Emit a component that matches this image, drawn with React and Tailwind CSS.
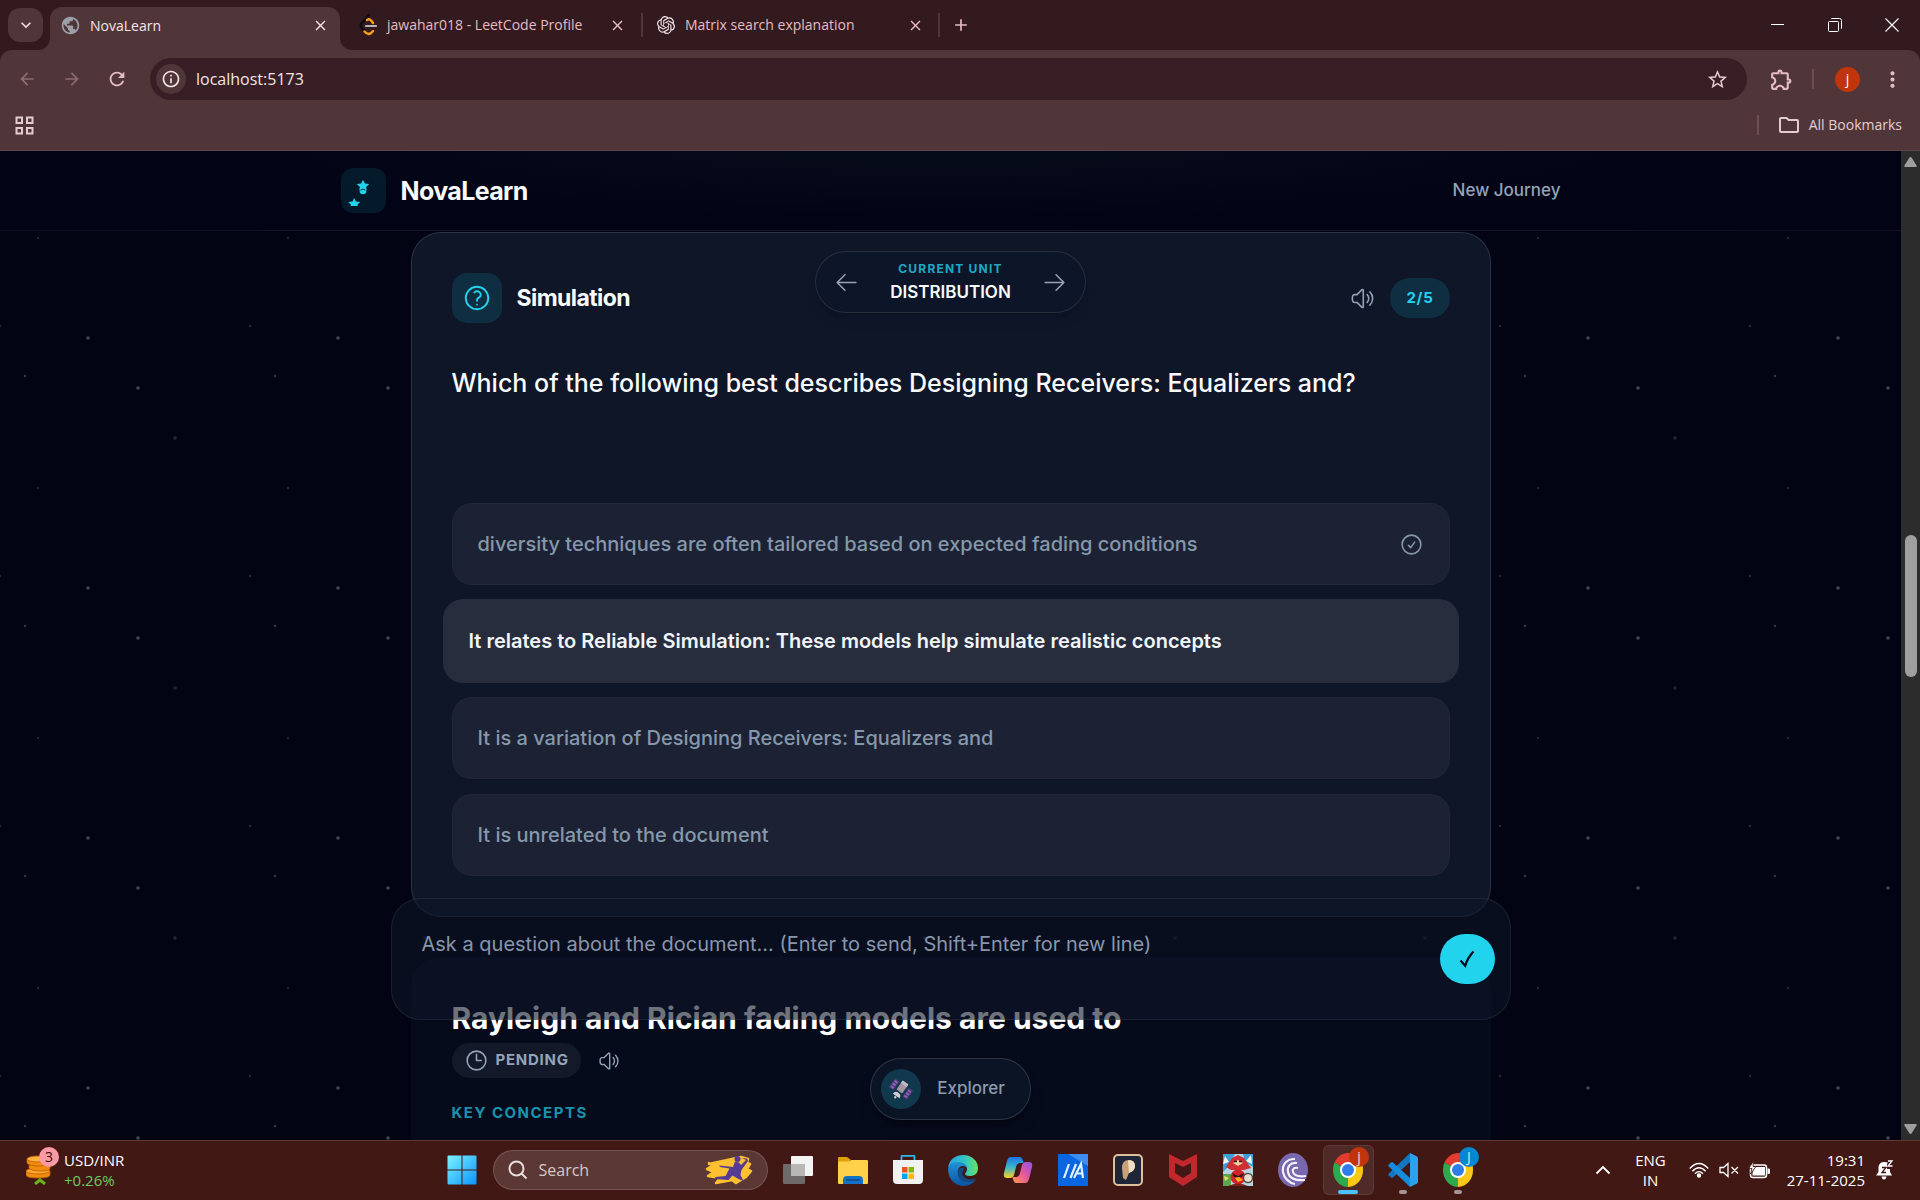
// src/App.jsx
import { useState } from 'react';
import {
  HiOutlineArrowLeft,
  HiOutlineArrowRight,
  HiOutlineCheckCircle,
  HiOutlineClock,
  HiOutlineQuestionMarkCircle,
  HiOutlineSpeakerWave,
} from 'react-icons/hi2';
import {
  MdArrowBack,
  MdArrowForward,
  MdClose,
  MdKeyboardArrowDown,
  MdMoreVert,
  MdOutlineExtension,
  MdOutlineFolder,
  MdOutlineInfo,
  MdPublic,
  MdRefresh,
  MdStarBorder,
  MdAdd,
} from 'react-icons/md';
import { SiOpenai } from 'react-icons/si';

const OPTIONS = [
  'diversity techniques are often tailored based on expected fading conditions',
  'It relates to Reliable Simulation: These models help simulate realistic concepts',
  'It is a variation of Designing Receivers: Equalizers and',
  'It is unrelated to the document',
];

/* ---------- Browser chrome ---------- */

function LeetCodeIcon() {
  return (
    <svg width="18" height="24" viewBox="0 0 18 24" fill="none" strokeLinecap="round">
      <path d="M10 2 2.5 10.5q-1.5 2 0 4L5 18" stroke="#0b0b0b" strokeWidth="2.4" />
      <path d="M5.5 18.500q3.500 4 6.500 1.500l2-2" stroke="#ffa116" strokeWidth="2.4" />
      <path d="M8 7q2.500-1.800 4.500 1l1.500 2" stroke="#ffa116" strokeWidth="2.4" />
      <path d="M7 13h10" stroke="#b3b3b3" strokeWidth="2.2" />
    </svg>
  );
}

function TabFlare({ flip }) {
  return (
    <svg width="12" height="12" viewBox="0 0 12 12" className={flip ? 'self-end -scale-x-100' : 'self-end'}>
      <path d="M12 0v12H0A12 12 0 0 0 12 0Z" fill="#503539" />
    </svg>
  );
}

function CloseTab({ label }) {
  return (
    <button aria-label={label} className="flex size-5 items-center justify-center">
      <MdClose size={17} />
    </button>
  );
}

function TabStrip() {
  return (
    <div className="flex h-[50px] items-stretch pl-2 text-sm text-[#e6bcc4]">
      <button aria-label="Search tabs" className="mt-2 flex h-[34px] w-[35px] items-center justify-center rounded-xl bg-[#503539] text-[#f3dcdf]">
        <MdKeyboardArrowDown size={20} />
      </button>
      <div className="-ml-[5px] flex">
        <TabFlare />
        <div className="mt-[7px] flex w-[290px] items-center rounded-t-xl bg-[#503539] pb-[6px] pl-[10px] pr-[10px] text-[#f6e3e6]">
          <MdPublic size={21} className="text-[#9aa0a6]" />
          <span className="ml-[9px] flex-1">NovaLearn</span>
          <CloseTab label="Close NovaLearn" />
        </div>
        <TabFlare flip />
      </div>
      <div className="flex w-[283px] items-center pl-[7px] pr-[8px]">
        <LeetCodeIcon />
        <span className="ml-[10px] flex-1">jawahar018 - LeetCode Profile</span>
        <CloseTab label="Close LeetCode" />
      </div>
      <div className="ml-[6px] flex w-[299px] items-center">
        <div className="h-6 w-[2px] bg-[#503539]" />
        <SiOpenai size={18} className="ml-[14px] text-[#f1e6e8]" />
        <span className="ml-[10px] flex-1">Matrix search explanation</span>
        <CloseTab label="Close Matrix search" />
        <div className="ml-[13px] h-6 w-[2px] bg-[#503539]" />
      </div>
      <button aria-label="New tab" className="ml-[11px] flex items-center">
        <MdAdd size={20} />
      </button>
      <div className="ml-auto flex text-white">
        <button aria-label="Minimize" className="flex w-[57px] items-center justify-center">
          <svg width="14" height="14" viewBox="0 0 14 14"><path d="M0 6.500h13" stroke="currentColor" /></svg>
        </button>
        <button aria-label="Restore" className="flex w-[57px] items-center justify-center">
          <svg width="14" height="14" viewBox="0 0 14 14" fill="none" stroke="currentColor">
            <rect x=".5" y="3.500" width="10" height="10" rx="1" />
            <path d="M3 1q.5-.5 1-.5h7.500q2 0 2 2V10q0 .5-.5 1" />
          </svg>
        </button>
        <button aria-label="Close window" className="flex w-[57px] items-center justify-center">
          <svg width="14" height="14" viewBox="0 0 14 14"><path d="m.5.5 13 13m0-13-13 13" stroke="currentColor" strokeWidth="1.200" /></svg>
        </button>
      </div>
    </div>
  );
}

function Toolbar() {
  return (
    <div className="rounded-t-xl border-b border-[#5d4647] bg-[#503539] pt-2 text-[#e6bcc4]">
      <div className="flex h-[42px] items-center">
        <div className="flex w-[150px] items-center pl-[17px] text-[#8a6c71]">
          <button aria-label="Back" className="mr-[25px]"><MdArrowBack size={20} /></button>
          <button aria-label="Forward" className="mr-[24px]"><MdArrowForward size={20} /></button>
          <button aria-label="Reload" className="text-[#e6bcc4]"><MdRefresh size={22} /></button>
        </div>
        <div className="flex h-full flex-1 items-center rounded-full bg-[#381f25] pl-[6px] pr-[18px] text-[#f3e4e6]">
          <span className="flex size-[30px] items-center justify-center rounded-full bg-[#503539]">
            <MdOutlineInfo size={20} />
          </span>
          <input
            aria-label="Address"
            defaultValue="localhost:5173"
            className="ml-[10px] h-6 flex-1 bg-transparent text-base outline-none"
          />
          <button aria-label="Bookmark this tab" className="text-[#e0c9cd]"><MdStarBorder size={23} /></button>
        </div>
        <div className="flex w-[173px] items-center pl-[22px]">
          <button aria-label="Extensions"><MdOutlineExtension size={25} /></button>
          <div className="ml-[18px] h-5 w-[2px] bg-[#6d4e53]" />
          <button aria-label="Profile" className="ml-[21px] flex size-[25px] items-center justify-center rounded-full bg-[#c0350b] text-sm leading-5 text-white">j</button>
          <button aria-label="Menu" className="ml-[20px]"><MdMoreVert size={25} /></button>
        </div>
      </div>
      <div className="flex h-[50px] items-center pl-[15px] pr-[18px] text-sm text-[#e3cdd0]">
        <button aria-label="Apps">
          <svg width="19" height="19" viewBox="0 0 19 19" fill="none" stroke="currentColor" strokeWidth="2">
            <path d="M1.500 1.500h5.500v5.500h-5.500zM12 1.500h5.500v5.500H12zM1.500 12h5.500v5.500h-5.500zM12 12h5.500v5.500H12z" />
          </svg>
        </button>
        <div className="ml-auto h-5 w-[2px] bg-[#6d4e53]" />
        <button className="ml-[18px] flex items-center gap-2">
          <MdOutlineFolder size={24} />
          All Bookmarks
        </button>
      </div>
    </div>
  );
}

/* ---------- NovaLearn page ---------- */

function Starfield() {
  return (
    <svg className="absolute inset-0 size-full" aria-hidden="true">
      <defs>
        <pattern id="stars" width="250" height="250" patternUnits="userSpaceOnUse">
          <g fill="#fff">
            <circle cx="88" cy="187" r="1.800" opacity=".26" />
            <circle cx="138" cy="237" r="1.800" opacity=".26" />
            <circle cx="175" cy="37" r="1.800" opacity=".13" />
            <circle cx="25" cy="225" r="1.200" opacity=".2" />
            <circle cx="0" cy="175" r="1.200" opacity=".14" />
            <circle cx="250" cy="175" r="1.200" opacity=".14" />
            <circle cx="38" cy="87" r="1.200" opacity=".12" />
          </g>
        </pattern>
      </defs>
      <rect width="100%" height="100%" fill="url(#stars)" />
    </svg>
  );
}

function NovaLogo() {
  return (
    <svg width="45" height="45" viewBox="0 0 45 45" fill="#22d3ee">
      <path d="m22 11.800 1.900 3.700 4.300.5-3.100 2.900.6 3.300h-7.400l.6-3.300-3.100-2.900 4.300-.5Z" />
      <circle cx="22" cy="23" r="3.300" />
      <path d="M19.500 22.200q2.500-2.400 5 0" fill="none" stroke="#04192a" strokeWidth=".9" />
      <path d="m13.200 30 1.700 3.400 4.300.6-2.700 2.600.3 1.400H9.600l.3-1.400L7.200 34l4.300-.6Z" />
    </svg>
  );
}

function PageHeader() {
  return (
    <header className="relative border-b border-white/6 bg-[radial-gradient(ellipse_at_top,#060b1a,#020415_60%)]">
      <div className="mx-auto flex max-w-[1280px] items-center gap-[15px] px-[30px] py-[17px]">
        <span className="rounded-xl bg-[#22d3ee]/10"><NovaLogo /></span>
        <h1 className="text-[25px] leading-8 font-bold tracking-tight text-slate-50">NovaLearn</h1>
        <a href="#new" className="ml-auto text-[17px] font-medium text-[#94a3b8]">New Journey</a>
      </div>
    </header>
  );
}

function Option({ text, active, done, onClick }) {
  return (
    <button
      onClick={onClick}
      className={
        active
          ? '-mx-[9px] -my-px flex h-[84px] items-center rounded-[20px] bg-[#282d3e] px-[26px] text-left text-xl font-semibold text-slate-100'
          : 'flex h-[82px] items-center justify-between rounded-[20px] border border-white/2 bg-[#1c2233] px-[25px] text-left text-xl font-medium text-[#8698ab]'
      }
    >
      {text}
      {done && <HiOutlineCheckCircle size={25} />}
    </button>
  );
}

function SimulationCard() {
  const [selected, setSelected] = useState(1);
  return (
    <section className="rounded-[30px] border border-white/12 bg-[#0e1628] p-10">
      <div className="flex items-center">
        <span className="flex size-[50px] items-center justify-center rounded-[15px] bg-[#22d3ee]/13 text-[#22d3ee]">
          <HiOutlineQuestionMarkCircle size={30} />
        </span>
        <h2 className="ml-[15px] text-[23px] leading-8 font-bold tracking-tight text-slate-50">Simulation</h2>
        <button aria-label="Read aloud" className="ml-auto text-[#94a3b8]">
          <HiOutlineSpeakerWave size={25} />
        </button>
        <span className="ml-[15px] rounded-full bg-[#22d3ee]/13 px-4 py-[10px] text-[15px] leading-5 font-bold tracking-wider text-[#22d3ee]">2/5</span>
      </div>
      <p className="mt-10 min-h-[100px] text-[25px] leading-10 font-medium text-slate-50">
        Which of the following best describes Designing Receivers: Equalizers and?
      </p>
      <div className="mt-10 flex flex-col gap-[15px]">
        {OPTIONS.map((text, i) => (
          <Option key={text} text={text} active={i === selected} done={i === 0} onClick={() => setSelected(i)} />
        ))}
      </div>
    </section>
  );
}

function TopicCard() {
  return (
    <section className="min-h-[300px] rounded-t-[30px] border border-transparent bg-[#060b1c] p-10">
      <h2 className="text-[30px] leading-10 font-bold text-white">Rayleigh and Rician fading models are used to</h2>
      <div className="mt-[5px] flex items-center gap-[17px] text-[#94a3b8]">
        <span className="flex h-[35px] items-center gap-[7px] rounded-full bg-white/6 px-3 text-[15px] font-bold tracking-wider">
          <HiOutlineClock size={25} />
          PENDING
        </span>
        <button aria-label="Read topic aloud"><HiOutlineSpeakerWave size={22} /></button>
      </div>
      <h3 className="mt-[25px] text-[15px] leading-5 font-bold tracking-widest text-[#22d3ee]/70">KEY CONCEPTS</h3>
    </section>
  );
}

function UnitSwitcher() {
  return (
    <div className="absolute inset-x-0 top-[100px] flex justify-center">
      <nav className="flex h-[62px] items-center gap-[31px] rounded-full border border-white/10 bg-[#0e1628]/80 px-[18px] text-[#94a3b8] shadow-lg shadow-black/10">
        <button aria-label="Previous unit"><HiOutlineArrowLeft size={25} /></button>
        <div className="text-center">
          <p className="text-[12px] leading-5 font-bold tracking-widest text-[#22d3ee]/80">CURRENT UNIT</p>
          <p className="text-[17px] leading-[26px] font-semibold text-slate-50">DISTRIBUTION</p>
        </div>
        <button aria-label="Next unit"><HiOutlineArrowRight size={25} /></button>
      </nav>
    </div>
  );
}

function AskBar() {
  return (
    <div className="absolute inset-x-0 bottom-[120px] flex justify-center">
      <form className="flex w-full max-w-[1120px] items-center rounded-[30px] border border-white/7 bg-[#0f1526]/60 p-[15px]" onSubmit={(e) => e.preventDefault()}>
        <textarea
          aria-label="Ask a question"
          placeholder="Ask a question about the document... (Enter to send, Shift+Enter for new line)"
          className="h-[90px] flex-1 resize-none bg-transparent p-[15px] text-xl leading-[30px] text-slate-200 outline-none placeholder:text-[#8896ab]"
        />
        <button aria-label="Send" className="flex h-[50px] w-[55px] items-center justify-center rounded-[25px] bg-[#22d3ee] text-slate-950">
          <svg width="16" height="18" viewBox="0 0 16 18" fill="none" stroke="currentColor" strokeWidth="2.200">
            <path d="m1.500 10.500 4.700 5.200Q8.500 8 14.500 1.500" />
          </svg>
        </button>
      </form>
    </div>
  );
}

function SatelliteIcon() {
  return (
    <svg width="24" height="24" viewBox="0 0 24 24">
      <g transform="rotate(35 12 12)">
        <rect x="1" y="6.500" width="5.500" height="11" fill="#4b3a63" />
        <path d="M2 8h3.500v2H2zm0 3.200h3.500v2H2zm0 3.200h3.500v2H2z" fill="#8b5fd0" />
        <rect x="17.500" y="6.500" width="5.500" height="11" fill="#4b3a63" />
        <path d="M18.500 8H22v2h-3.500zm0 3.200H22v2h-3.500zm0 3.200H22v2h-3.500z" fill="#8b5fd0" />
        <rect x="8.500" y="4" width="7" height="11" rx="1" fill="#a595a5" />
        <rect x="8.500" y="4" width="7" height="3" fill="#c6bac5" />
        <path d="M8 20.500a4 4 0 0 1 8 0Z" fill="#d4cbd3" />
        <circle cx="12" cy="22" r="1.200" fill="#d4cbd3" />
      </g>
    </svg>
  );
}

function ExplorerButton() {
  return (
    <div className="absolute inset-x-0 bottom-[20px] flex justify-center">
      <button className="flex h-[62px] items-center gap-4 rounded-full border border-white/14 bg-[#0b1424] pl-[10px] pr-[25px] text-[17px] font-medium text-[#8c9bb0] shadow-lg shadow-black/30">
        <span className="flex size-10 items-center justify-center rounded-full bg-[#11394e]"><SatelliteIcon /></span>
        Explorer
      </button>
    </div>
  );
}

function Scrollbar() {
  return (
    <div className="flex w-[19px] flex-col items-center bg-[#2c2c2c] py-[6px]">
      <svg width="13" height="10" viewBox="0 0 13 10"><path d="M6.500 0q.8 0 1.200.7l5 8q.3 1.300-1 1.300H1.300Q0 10 .3 8.700l5-8Q5.700 0 6.500 0Z" fill="#9f9f9f" /></svg>
      <div className="grow-[368]" />
      <div className="w-3 grow-[142] rounded-full bg-[#9f9f9f]" />
      <div className="grow-[447]" />
      <svg width="13" height="10" viewBox="0 0 13 10"><path d="M6.500 10q.8 0 1.200-.7l5-8Q13 0 11.700 0H1.300Q0 0 .3 1.300l5 8q.4.7 1.200.7Z" fill="#9f9f9f" /></svg>
    </div>
  );
}

/* ---------- Windows taskbar ---------- */

function TaskItem({ label, active, running, children }) {
  return (
    <button
      aria-label={label}
      className={
        active
          ? 'relative mx-[2px] flex h-[50px] w-[51px] items-center justify-center rounded-md border border-white/8 bg-white/8'
          : 'relative flex h-[50px] w-[55px] items-center justify-center'
      }
    >
      {children}
      {active && <span className="absolute bottom-0 h-1 w-5 rounded-full bg-[#4cc2ff]" />}
      {running && <span className="absolute bottom-px h-1 w-2 rounded-full bg-[#a69594]" />}
    </button>
  );
}

function WindowsIcon() {
  return (
    <svg width="30" height="30" viewBox="0 0 30 30">
      <defs>
        <linearGradient id="win" x1="0" y1="0" x2="1" y2="1"><stop stopColor="#7cf3ff" /><stop offset="1" stopColor="#0a94ff" /></linearGradient>
      </defs>
      <path d="M.5 1.500q0-1 1-1h13v14H.5zM15.500.5h13q1 0 1 1v13h-14zM.5 15.500h14v14h-13q-1 0-1-1zM15.500 15.500h14v13q0 1-1 1h-13z" fill="url(#win)" />
    </svg>
  );
}

function SearchArt() {
  return (
    <svg width="48" height="32" viewBox="0 0 48 32">
      <path d="M4 10 36 3l7 2-1 4 3 1-3 5 4 2-5 6-10 6-4-3-16 3 4-5-12-2 6-4-7-3 6-4-4-2Z" fill="#fdc02f" strokeLinejoin="round" stroke="#fdc02f" strokeWidth="2.500" />
      <path d="M14 11.500 28 13l2-5.500 4 1 2 2.500 5-5-4-2 5 .5 1 2.500-6.500 9-1 5 3 6-5-2-6-3.500-4 4.500-14-1 1-2 10-1 4-7.500-9.500-1.500Z" fill="#563b95" />
      <circle cx="32.500" cy="5" r="3" fill="#563b95" />
    </svg>
  );
}

function TaskViewIcon() {
  return (
    <svg width="30" height="30" viewBox="0 0 30 30">
      <rect x="8" y="1" width="22" height="20" rx="1" fill="#f3f3f3" />
      <rect x="0" y="9" width="22" height="20" rx="1" fill="#6d6a69" />
      <path d="M8 9h14v12H8z" fill="#b9b6b6" />
    </svg>
  );
}

function FolderIcon() {
  return (
    <svg width="30" height="30" viewBox="0 0 30 30">
      <path d="M0 3q0-1 1-1h8l4 3h-1v5H0z" fill="#e0a009" />
      <path d="M0 7.500Q0 6.500 1 6.500h10l2-1.500h16q1 0 1 1v22q0 1-1 1H1q-1 0-1-1z" fill="#ffd04a" />
      <path d="M5 29v-4q0-4 4-4h12q4 0 4 4v4z" fill="#1471c4" />
      <path d="M8 25h14" stroke="#0b4d8e" strokeWidth="1.500" />
    </svg>
  );
}

function StoreIcon() {
  return (
    <svg width="30" height="30" viewBox="0 0 30 30">
      <path d="M8.500 6V1.500q0-.7 1-.7h11q1 0 1 .7V6" fill="none" stroke="#2fb5ee" strokeWidth="1.800" />
      <path d="M0 5h30v20q0 4-4 4H4q-4 0-4-4Z" fill="#f1f1f1" />
      <path d="M9 12h5.500v5.500H9z" fill="#f25022" />
      <path d="M15.500 12H21v5.500h-5.500z" fill="#7fba00" />
      <path d="M9 18.500h5.500V24H9z" fill="#00a4ef" />
      <path d="M15.500 18.500H21V24h-5.500z" fill="#ffb900" />
    </svg>
  );
}

function EdgeIcon() {
  return (
    <svg width="30" height="32" viewBox="0 0 30 32">
      <defs>
        <linearGradient id="edgeTop" x1="0" x2="1"><stop stopColor="#249fe0" /><stop offset=".6" stopColor="#34c7c2" /><stop offset="1" stopColor="#6ae35e" /></linearGradient>
        <linearGradient id="edgeLow" x1="0" y1="0" x2="0" y2="1"><stop stopColor="#1f93d8" /><stop offset="1" stopColor="#0d53a2" /></linearGradient>
      </defs>
      <path d="M0 14C1 6 7 1 15 1c9 0 15 6 15 13 0 6-4 8-8 8-3 0-5-1-5-2s2-2 2-5c0-4-4-6-8-6C6 9 2 11 0 14Z" fill="url(#edgeTop)" />
      <path d="M0 15c1-4 5-7 10-7 5 0 9 3 9 7 0-2-2-3-4-3-4 0-6 4-5 8 1 5 6 8 11 8 3 0 5-1 7-3-2 4-7 7-12 7C7 32 0 25 0 15Z" fill="url(#edgeLow)" />
      <path d="M10 18c-1 6 4 11 10 10 4 0 6-2 8-4-4 2-9 2-12-1-2-2-2-4-1-6 1-1 1-2 1-3-3-1-6 1-6 4Z" fill="#124a88" />
    </svg>
  );
}

function CopilotIcon() {
  return (
    <svg width="30" height="30" viewBox="0 0 30 30">
      <defs>
        <linearGradient id="copA" x1="0" y1="0" x2="0" y2="1"><stop stopColor="#1c74e8" /><stop offset=".5" stopColor="#3bb8c8" /><stop offset="1" stopColor="#ffd21e" /></linearGradient>
        <linearGradient id="copB" x1="1" y1="0" x2="0" y2="1"><stop stopColor="#8a53f0" /><stop offset=".5" stopColor="#e8569d" /><stop offset="1" stopColor="#ff9a4c" /></linearGradient>
      </defs>
      <path d="M8 2h9q2 0 3 4l.5 2H17q-3 0-4 4l-2 8q-1 3-4 3H4q-4 0-3-5L4 6q1-4 4-4Z" fill="url(#copA)" />
      <path d="M22 28h-9q-2 0-3-4l-.5-2H13q3 0 4-4l2-8q1-3 4-3h3q4 0 3 5l-3 12q-1 4-4 4Z" fill="url(#copB)" />
    </svg>
  );
}

function MyAsusIcon() {
  return (
    <svg width="30" height="32" viewBox="0 0 30 32">
      <path d="M0 0h30v32H0z" fill="#0867e0" />
      <path d="M10 0h20v12Z" fill="#3e8df0" />
      <path d="m6 24 5-14M12.500 24l5.500-14M16 24l7-14 2 14M19 19.500h6" stroke="#e5f0ff" strokeWidth="2.200" fill="none" />
    </svg>
  );
}

function PicIcon() {
  return (
    <svg width="30" height="32" viewBox="0 0 30 32">
      <rect x="1" y="1" width="28" height="30" rx="4" fill="#1f2637" stroke="#dcc09b" strokeWidth="2" />
      <path d="M9 14q0-8 7-8 6 0 6 6 0 5-6 7l-3 7-3-2Z" fill="#c8a178" />
      <path d="M15 6q7 0 7 6 0 5-6 7Z" fill="#f1ddc3" />
    </svg>
  );
}

function McAfeeIcon() {
  return (
    <svg width="28" height="32" viewBox="0 0 28 32">
      <path d="m0 0 14 7L28 0v23l-14 9-14-9Zm6 9v10l8 5 8-5V9l-8 4Z" fill="#c0282d" fillRule="evenodd" />
    </svg>
  );
}

function GameIcon() {
  return (
    <svg width="30" height="32" viewBox="0 0 30 32">
      <path d="M0 0h30v32H0z" fill="#b9d3e2" />
      <path d="M0 0h12L4 14l-4 4ZM20 0h10v13L22 8Z" fill="#3aa0d8" />
      <path d="m2 2 4 6-6 2ZM28 1l-5 6 6 3Z" fill="#f3f6f8" />
      <path d="m3 13 6-9 6-3 6 3 7 10-7 2H8Z" fill="#cf2f33" />
      <path d="m10 9 5-3 5 3-5 3Z" fill="#f3cf9d" />
      <path d="M11 7.500h3M16 7.500h3" stroke="#2b1717" strokeWidth="1.500" />
      <path d="M0 20h8v12H0z" fill="#57a84c" />
      <path d="m1 22 5 2-4 3Z" fill="#f1e15a" />
      <circle cx="15" cy="23" r="7.500" fill="#d3222a" />
      <path d="m9 19 6 3 6-3-2 4h-8Z" fill="#2b1717" />
      <path d="m12 24 4-1 4 3-5 2Z" fill="#f6b321" />
      <circle cx="25" cy="24" r="4.500" fill="#e9e2d3" stroke="#5a4a40" strokeWidth="1.500" />
      <path d="M5 32q10-5 20 0Z" fill="#7a2420" />
    </svg>
  );
}

function TorrentIcon() {
  return (
    <svg width="30" height="34" viewBox="0 0 30 34">
      <ellipse cx="15" cy="17" rx="15" ry="17" fill="#7868ae" />
      <g fill="none" stroke="#f3f0fa" strokeWidth="2.200">
        <path d="M17 6C8 6 4 12 5 19c1 6 6 11 12 12" />
        <path d="M19 10c-7-1-10 4-9 9 1 6 6 9 17 8" />
        <path d="M20 15c-4-1-6 1-5 4 1 4 5 5 13 4" />
      </g>
    </svg>
  );
}

function ChromeIcon({ badge, color }) {
  return (
    <span className="relative">
      <svg width="30" height="34" viewBox="0 0 30 34">
        <path d="M15 17 1.500 9.500C4 4 9 0 15 0s11 4 13.500 9Z" fill="#e33b2e" />
        <path d="M15 17 15 34C7 34 0 27 0 17c0-3 .5-5 1.500-7.500Z" fill="#2da94f" />
        <path d="M15 17 28.500 9c1 2 1.500 5 1.500 8 0 9-6 16.500-15 17Z" fill="#fdc813" />
        <circle cx="15" cy="17" r="8" fill="#fff" />
        <circle cx="15" cy="17" r="6" fill="#2f7de9" />
      </svg>
      <span className={`absolute -top-[6px] left-4 flex size-5 items-center justify-center rounded-full text-sm leading-5 text-white/80 ${color}`}>
        {badge}
      </span>
    </span>
  );
}

function VsCodeIcon() {
  return (
    <svg width="30" height="34" viewBox="0 0 30 34">
      <path d="M22 0 29 3.500q1 .5 1 2v23q0 1.500-1 2L22 34Z" fill="#2aa2ee" />
      <path d="M22 0v9L5 24.500q-1 .8-2 0l-2.200-2q-1-1 0-2Z" fill="#1177c2" />
      <path d="M22 34v-9L5 9.500q-1-.8-2 0l-2.200 2q-1 1 0 2Z" fill="#178cdc" />
    </svg>
  );
}

function MarketWidget() {
  return (
    <button className="flex items-center gap-[13px] pl-[26px] text-left text-[15px] leading-5">
      <span className="relative">
        <svg width="25" height="30" viewBox="0 0 25 30">
          <g fill="#f28c0f" stroke="#b65f06" strokeWidth=".8">
            <path d="M0 16v4q0 3 12 3t12-3v-4Z" />
            <ellipse cx="12" cy="16" rx="12" ry="3" fill="#ffa62b" />
            <path d="M3 10v3q2 3 12 3t9-3v-3Z" />
            <path d="M1 4v4q2 3 12 3t9-3V4Z" />
            <ellipse cx="11" cy="4" rx="10" ry="3" fill="#ffb13c" />
          </g>
          <path d="m9 29 5-4 5 4" stroke="#6bb21c" strokeWidth="3" fill="none" />
        </svg>
        <span className="absolute -top-[8px] left-[13px] flex size-5 items-center justify-center rounded-full bg-[#ff99a4] text-sm leading-5 text-[#2c1214]">3</span>
      </span>
      <span>
        <span className="block text-white">USD/INR</span>
        <span className="block text-[#6ccb5f]">+0.26%</span>
      </span>
    </button>
  );
}

function Tray() {
  return (
    <div className="flex items-center justify-end pr-[26px] text-white">
      <button aria-label="Show hidden icons">
        <svg width="16" height="10" viewBox="0 0 16 10"><path d="m1.500 8.500 6.500-6.500 6.500 6.500" fill="none" stroke="currentColor" strokeWidth="1.800" /></svg>
      </button>
      <button className="ml-[24px] text-center text-[15px] leading-5">ENG<br />IN</button>
      <div className="ml-[23px] flex items-center gap-[10px]">
        <svg width="20" height="16" viewBox="0 0 20 16" fill="none" stroke="currentColor" strokeWidth="1.400">
          <path d="M.7 6.500Q10-3.500 19.300 6.500M3.400 9.200q6.600-7 13.200 0M6 11.700q4-4.200 8 0" />
          <circle cx="10" cy="13.500" r="1.500" fill="currentColor" />
        </svg>
        <svg width="20" height="16" viewBox="0 0 20 16" fill="none" stroke="currentColor" strokeWidth="1.300">
          <path d="M1 5.500h3.500L9 1.500v13l-4.500-4H1ZM12.500 5l6.500 6.500M19 5l-6.500 6.500" />
        </svg>
        <svg width="21" height="18" viewBox="0 0 21 18">
          <rect x="1.500" y="4" width="16" height="12.500" rx="2.500" fill="none" stroke="currentColor" strokeWidth="1.500" />
          <path d="M6 6h10v8.500H3.500V12ZM18.500 7.500h1q1.500 0 1.500 1v3.500q0 1-1.500 1h-1z" fill="currentColor" />
          <path d="M4.500 0 0 7.500h3L1.500 13 7 5.500H4Z" fill="currentColor" stroke="#421814" strokeWidth=".8" />
        </svg>
      </div>
      <button className="ml-[17px] text-right text-[15px] leading-5">19:31<br />27-11-2025</button>
      <svg width="18" height="20" viewBox="0 0 18 20" className="ml-[11px]">
        <path d="M8 2C4 2 2.500 5 2.500 8v4L0 15.500h16L14 12V9h-3V4l1-1.200Q10.500 2 8 2ZM5.500 16.500h5q-.5 3-2.500 3t-2.500-3Z" fill="currentColor" />
        <path d="M12 1h4l-4 5h4.500" stroke="currentColor" strokeWidth="1.300" fill="none" />
        <path d="M6 7.500h4L6 12.500h4" stroke="#421814" strokeWidth="1.300" fill="none" />
      </svg>
    </div>
  );
}

function Taskbar() {
  return (
    <footer className="grid h-[60px] shrink-0 grid-cols-[1fr_auto_1fr] items-center border-t border-[#5c3733] bg-[#421814] pb-px">
      <MarketWidget />
      <div className="flex items-center">
        <TaskItem label="Start"><WindowsIcon /></TaskItem>
        <label className="ml-[3px] mr-[3px] flex h-10 w-[275px] items-center rounded-full border border-white/15 bg-white/14 pl-[14px] pr-[14px]">
          <svg width="20" height="20" viewBox="0 0 20 20" fill="none" stroke="#e8dcdc" strokeWidth="2">
            <circle cx="8.500" cy="8.500" r="7" />
            <path d="m13.500 13.500 5 5" />
          </svg>
          <input type="text" aria-label="Search" placeholder="Search" className="ml-[11px] w-0 flex-1 bg-transparent text-base text-white outline-none placeholder:text-[#d6c8c8]" />
          <SearchArt />
        </label>
        <TaskItem label="Task view"><TaskViewIcon /></TaskItem>
        <TaskItem label="File Explorer"><FolderIcon /></TaskItem>
        <TaskItem label="Microsoft Store"><StoreIcon /></TaskItem>
        <TaskItem label="Edge"><EdgeIcon /></TaskItem>
        <TaskItem label="Copilot"><CopilotIcon /></TaskItem>
        <TaskItem label="MyASUS"><MyAsusIcon /></TaskItem>
        <TaskItem label="Photos"><PicIcon /></TaskItem>
        <TaskItem label="McAfee"><McAfeeIcon /></TaskItem>
        <TaskItem label="Game"><GameIcon /></TaskItem>
        <TaskItem label="BitTorrent"><TorrentIcon /></TaskItem>
        <TaskItem label="Chrome" active><ChromeIcon badge="j" color="bg-[#c0350b]" /></TaskItem>
        <TaskItem label="Visual Studio Code" running><VsCodeIcon /></TaskItem>
        <TaskItem label="Chrome, second profile" running><ChromeIcon badge="J" color="bg-[#0288d1]" /></TaskItem>
      </div>
      <Tray />
    </footer>
  );
}

export default function App() {
  return (
    <div className="flex h-screen flex-col overflow-hidden bg-[#321a1f] font-['Open_Sans',sans-serif]">
      <TabStrip />
      <Toolbar />
      <div className="flex min-h-0 flex-1">
        <div className="relative flex-1 overflow-hidden bg-[#020414] font-[Inter,sans-serif]">
          <Starfield />
          <PageHeader />
          <main className="relative mx-auto flex max-w-[1080px] flex-col gap-10 pt-px">
            <SimulationCard />
            <TopicCard />
          </main>
          <UnitSwitcher />
          <AskBar />
          <ExplorerButton />
        </div>
        <Scrollbar />
      </div>
      <Taskbar />
    </div>
  );
}
